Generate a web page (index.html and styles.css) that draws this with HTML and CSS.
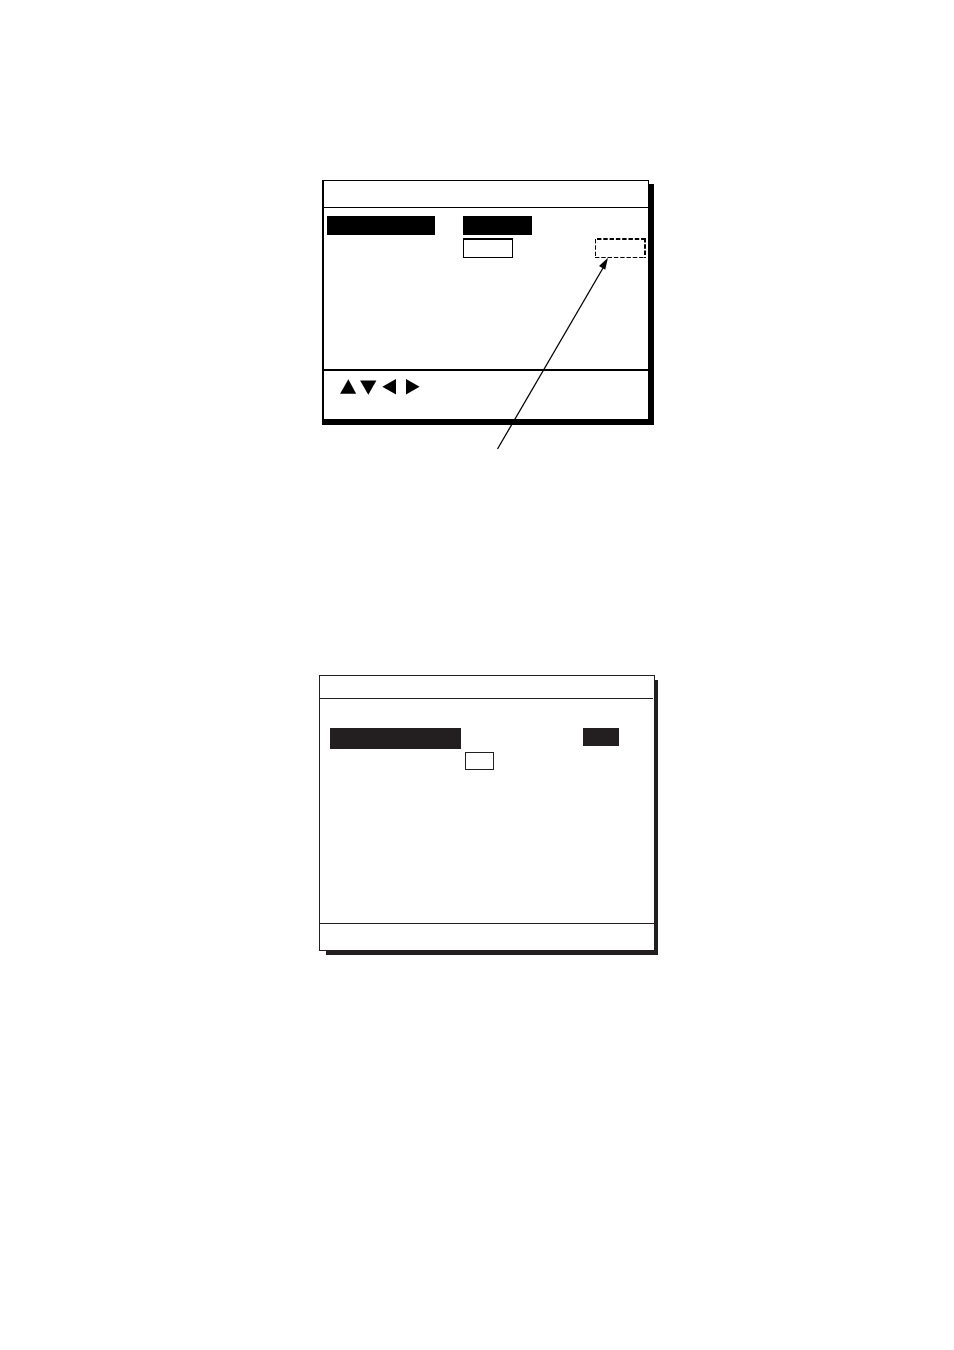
FILE: index.html
```
<!DOCTYPE html>
<html lang="en">

<head>
    <meta charset="UTF-8">
    <meta name="viewport" content="width=device-width, initial-scale=1.0">
    <title>Menu screens</title>
    <link rel="stylesheet" href="styles.css">
</head>

<body>
    <main class="page">
        <section class="screen screen-main">
            <header class="screen-header"></header>
            <div class="screen-body">
                <div class="row">
                    <div class="label"><div class="highlight"></div></div>
                    <div class="value"><div class="highlight"></div></div>
                </div>
                <div class="row">
                    <div class="label"></div>
                    <div class="value">
                        <div class="option"></div>
                        <svg class="option-dashed" width="51" height="20" viewBox="0 0 51 20" fill="none" stroke="#000">
                            <path d="M2 1H51" stroke-width="2" stroke-dasharray="4.4 1.9" />
                            <path d="M50 0V20" stroke-width="2" stroke-dasharray="4.4 1.9" />
                            <path d="M0.5 1V20" stroke-dasharray="4.4 1.9" />
                            <path d="M0 19.5H51" stroke-dasharray="4.4 1.9" />
                        </svg>
                    </div>
                </div>
            </div>
            <footer class="screen-footer">
                <svg width="80" height="16" viewBox="0 0 80 16">
                    <path d="M8.3 .2L16.2 14.8H.1Z" />
                    <path d="M20.1 1.6H36.4L28.3 15.8Z" />
                    <path d="M56 0V15.5L42.3 7.8Z" />
                    <path d="M66 0V15.5L79.6 7.8Z" />
                </svg>
            </footer>
            <!-- Pointer to the dashed option -->
            <svg class="pointer" width="114" height="194" viewBox="0 0 114 194">
                <path d="M1.5 192L107 11" fill="none" stroke="#000" stroke-width="1.3" />
                <path d="M112 .8L103 9L109.2 12.8Z" />
            </svg>
        </section>

        <section class="screen screen-sub">
            <header class="screen-header"></header>
            <div class="screen-body">
                <div class="row">
                    <div class="label"><div class="highlight"></div></div>
                    <div class="value"><div class="highlight"></div></div>
                </div>
                <div class="row">
                    <div class="label"></div>
                    <div class="value"><div class="option"></div></div>
                </div>
            </div>
            <footer class="screen-footer"></footer>
        </section>
    </main>
</body>

</html>
```
FILE: styles.css
```
* {
    box-sizing: border-box;
}

body {
    margin: 0;
    padding: 180px 0 180px 23px;
    background-color: white;
    font-family: "Liberation Sans", Arial, sans-serif;
}

.page {
    position: relative;
    z-index: 0;
    max-width: 339px;
    margin: 0 auto;
    display: flex;
    flex-direction: column;
    gap: 255px;
}

.screen {
    position: relative;
    border: 1px solid;
    background-color: white;
}

.screen-header {
    border-bottom: 1px solid;
}

.row {
    display: grid;
}

.value {
    display: flex;
    justify-content: space-between;
}

.option {
    border: 1px solid;
}

/* First screen */
.screen-main {
    margin-left: 3px;
    margin-right: 9px;
    color: black;
    border-left-width: 2px;
    box-shadow: 0 5px 0 black, 5px 4px 0 black, 5px 5px 0 black;
}

.screen-main .screen-header {
    height: 27px;
}

.screen-main .screen-body {
    display: flex;
    flex-direction: column;
    gap: 3px;
    min-height: 161px;
    padding: 8px 2px 0 3px;
}

.screen-main .row {
    grid-template-columns: 136px 1fr;
}

.screen-main .highlight {
    width: 108px;
    height: 19px;
    background-color: black;
}

.screen-main .value .highlight {
    width: 69px;
}

.screen-main .option {
    width: 50px;
    height: 20px;
    border-top-width: 2px;
}

.screen-main .screen-footer {
    display: flex;
    height: 50px;
    padding: 8px 16px;
    border-top: 2px solid;
}

.pointer {
    position: absolute;
    right: 38px;
    top: 76px;
}

/* Second screen */
.screen-sub {
    margin-right: 3px;
    color: #231f20;
}

.screen-sub::before {
    content: "";
    position: absolute;
    z-index: -1;
    top: 4px;
    right: -4px;
    bottom: -5px;
    left: 6px;
    background-color: #231f20;
}

.screen-sub .screen-header {
    height: 23px;
    margin-right: 1px;
}

.screen-sub .screen-body {
    display: flex;
    flex-direction: column;
    gap: 3px;
    min-height: 224px;
    padding: 29px 10px 0;
}

.screen-sub .row {
    grid-template-columns: 135px 1fr;
}

.screen-sub .highlight {
    width: 131px;
    height: 21px;
    background-color: #231f20;
}

.screen-sub .value .highlight {
    width: 36px;
    height: 18px;
    margin-left: auto;
    margin-right: 25px;
}

.screen-sub .option {
    width: 29px;
    height: 18px;
}

.screen-sub .screen-footer {
    height: 27px;
    border-top: 1px solid;
}
```
